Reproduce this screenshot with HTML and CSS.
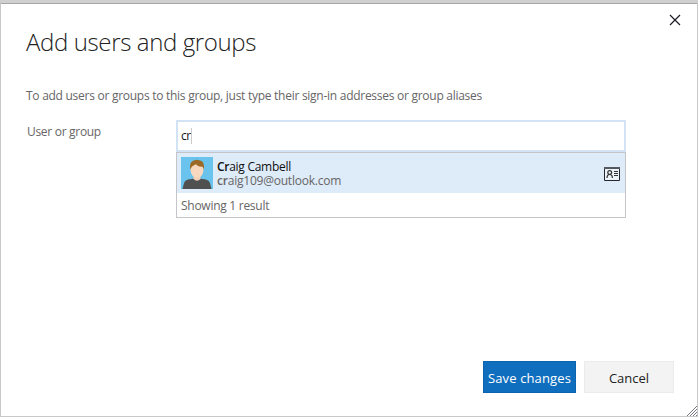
FILE: index.html
```html
<!DOCTYPE html>
<html lang="en">
<head>
<meta charset="utf-8">
<title>Add users and groups</title>
<link rel="stylesheet" href="styles.css">
</head>
<body>
<main class="dialog">
  <header class="header">
    <h1 class="title">Add users and groups</h1>
    <button class="close" aria-label="Close">
      <svg width="12" height="12" viewBox="0 0 12 12"><path d="M1 1l10 10M11 1L1 11" fill="none" stroke="#1c1c28" stroke-width="1.2"/></svg>
    </button>
  </header>
  <p class="hint">To add users or groups to this group, just type their sign-in addresses or group aliases</p>
  <div class="field">
    <div class="label"><span>User or group</span></div>
    <div class="picker">
      <div class="input"><span class="typed">cr</span><i class="caret"></i></div>
      <div class="results">
        <div class="person">
          <svg class="avatar" width="32" height="32" viewBox="0 0 32 32">
            <path fill="#6ac3ed" d="M0 0h32v32H0z"/>
            <path fill="#505050" d="M1.500 32l1.500-6q.8-3 4-3.500l5-.8h8l5 .8q3.200.5 4 3.500l1.500 6z"/>
            <path fill="#f3cfb5" d="M12.500 17h7v5q-3.500 3.500-7 0z"/>
            <ellipse cx="16" cy="12.800" rx="6.500" ry="8" fill="#f9d8c0"/>
            <path fill="#9b6a27" d="M9.300 12.500Q8.300 6.500 11 4.500q3.500-2.500 7.500-1.300 3 .5 3.700 2.500 1.300 2.500.5 6.800l-1.200-2.700q-4.200.2-6.700-2.500-2.500 1-4 2.500z"/>
          </svg>
          <div class="details">
            <div class="name"><b>Cr</b>aig Cambell</div>
            <div class="mail"><b>cr</b>aig109@outlook.com</div>
          </div>
          <svg class="card" width="16" height="14" viewBox="0 0 16 14">
            <path d="M.5.500h15v13H.5z" fill="#edf3fa" stroke="#26262e"/>
            <path d="M0 1h16" stroke="#55585f" stroke-width="2"/>
            <circle cx="5.700" cy="5.500" r="1.900" fill="none" stroke="#333" stroke-width="1.200"/>
            <path d="M3 11q0-3.500 2.700-3.500T8.400 11M10 4.500h4M10 6.500h4M10 8.500h4" fill="none" stroke="#333" stroke-width="1.200"/>
          </svg>
        </div>
        <div class="count"><span>Showing 1 result</span></div>
      </div>
    </div>
  </div>
  <footer class="actions">
    <button class="button primary"><span>Save changes</span></button>
    <button class="button secondary"><span>Cancel</span></button>
  </footer>
  <svg class="grip" width="10" height="10" viewBox="0 0 10 10"><path d="M0 10L10 0M3 10l7-7M6 10l4-4M9 10l1-1" fill="none" stroke="#777783"/></svg>
</main>
</body>
</html>
```
FILE: styles.css
```css
* { box-sizing: border-box; }
body {
  margin: 0;
  font: 12px/16px "Open Sans", "Noto Sans", sans-serif;
  color: #666;
}
button { font: inherit; padding: 0; border: 0; }
.dialog {
  position: relative;
  display: flex;
  flex-direction: column;
  width: 698px;
  height: 417px;
  background: #fff;
  border: 1px solid #c8c8c8;
  border-top: 3px solid #d0d0d0;
}
.header {
  display: flex;
  justify-content: space-between;
  height: 85px;
  padding: 9px 16px 0 25px;
  border-top: 1px solid #a6a6a6;
}
.title {
  margin: 11px 0 0;
  font-size: 24px;
  line-height: 36px;
  font-weight: 300;
  color: #222;
  letter-spacing: -0.37px;
}
.close { display: flex; width: 12px; height: 12px; margin-top: 1px; background: none; }
.hint { margin: 0 0 0 25px; letter-spacing: -0.27px; white-space: nowrap; }
.field { display: flex; margin-top: 16px; padding-left: 26px; }
.label { width: 149px; padding-top: 4px; letter-spacing: -0.3px; }
.picker { width: 450px; }
.input {
  display: flex;
  align-items: center;
  height: 32px;
  padding-left: 3px;
  border: 2px solid #d1e3f5;
  color: #111;
}
.typed { letter-spacing: -0.4px; }
.caret { width: 1px; height: 16px; margin-left: 0.4px; background: #ccc; }
.results { height: 66px; border: 1px solid #c3c5c8; }
.person { display: flex; align-items: center; height: 40px; padding: 0 5px 0 4px; background: #deebf8; }
.details { flex: 1; margin-left: 4px; line-height: 14px; }
.name { padding-top: 1px; color: #111; letter-spacing: -0.28px; }
.mail { letter-spacing: -0.22px; }
b { font-weight: 600; }
.card { margin-top: 2px; }
.count { padding: 5px 4px; letter-spacing: -0.27px; }
.actions { display: flex; gap: 8px; margin: auto 23px 23px auto; }
.button { height: 32px; padding-top: 1px; font-size: 13px; line-height: 30px; white-space: nowrap; }
.primary { width: 93px; color: #fff; background: #106ebe; border: 1px solid #0b64b0; letter-spacing: 0.12px; }
.secondary { width: 90px; color: #222; background: #f3f3f3; border: 1px solid #ebebeb; }
.grip { position: absolute; right: 0; bottom: 0; }
```
